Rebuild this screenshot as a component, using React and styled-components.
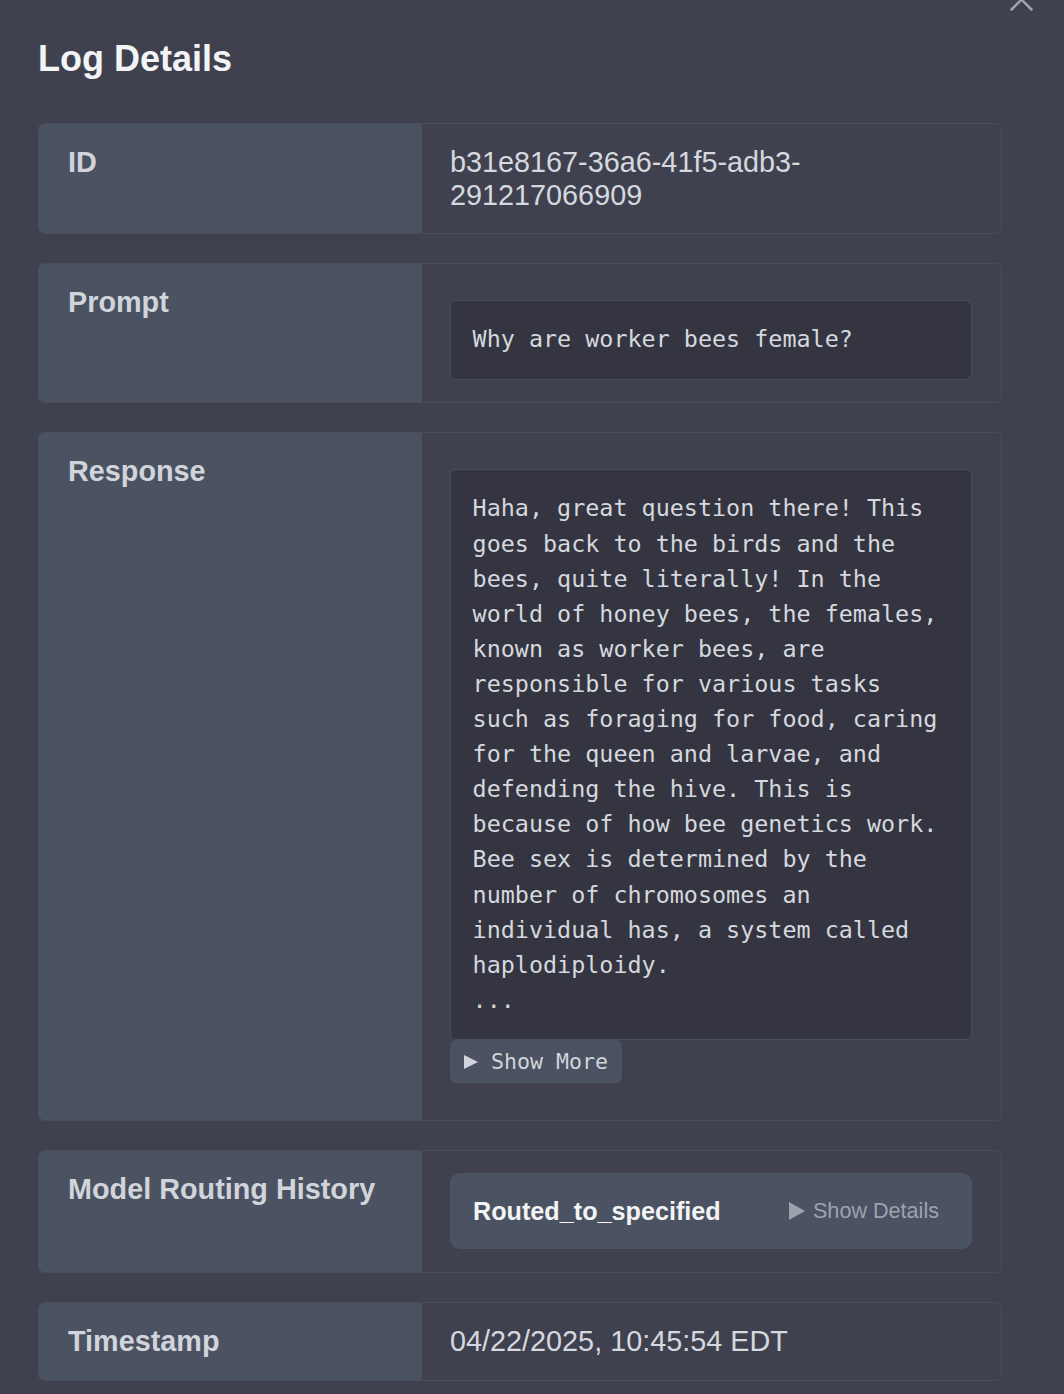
import React from "react";
import styled, { createGlobalStyle } from "styled-components";

const Global = createGlobalStyle`
  html, body {
    margin: 0;
    padding: 0;
    background: #40414f;
  }
  body {
    font-family: "Liberation Sans", Arial, sans-serif;
    -webkit-font-smoothing: antialiased;
  }
  * { box-sizing: border-box; }
`;

const Page = styled.div`
  position: relative;
  min-height: 1394px;
  padding: 1px 62px 0 38px;
  background: #40414f;
  overflow: hidden;
`;

const CloseButton = styled.button`
  position: absolute;
  top: -12px;
  right: 31px;
  width: 23px;
  height: 23px;
  padding: 0;
  border: 0;
  background: none;
  color: #9ca3af;
  display: block;
  cursor: pointer;
  svg { display: block; }
`;

const Title = styled.h2`
  margin: 37px 0 44px;
  font-size: 36px;
  font-weight: 700;
  line-height: 41px;
  color: #f3f4f6;
`;

const Rows = styled.div`
  display: flex;
  flex-direction: column;
  gap: 28.8px;
`;

const Row = styled.div`
  display: grid;
  grid-template-columns: 383px 1fr;
  border: 1px solid #4a4d5a;
  border-radius: 6px;
  overflow: hidden;
`;

const Label = styled.div`
  background: #4b5261;
  padding: 22px 29px 18px;
  font-size: 28.8px;
  font-weight: 700;
  line-height: 32.5px;
  color: #d1d5db;
`;

const Value = styled.div`
  padding: 22px 29px 22px 28px;
  font-size: 28.8px;
  line-height: 32.5px;
  color: #d5d8de;
  min-width: 0;
`;

const Code = styled.pre`
  margin: 14px 0 0;
  padding: 21.6px;
  background: #343541;
  border: 1px solid #4a4d5a;
  border-radius: 6px;
  font-family: "DejaVu Sans Mono", "Liberation Mono", monospace;
  font-size: 23.4px;
  line-height: 35.1px;
  color: #d5d8de;
  white-space: pre-wrap;
  word-break: normal;
`;

const ShowMore = styled.button`
  display: flex;
  align-items: center;
  gap: 13px;
  width: max-content;
  height: 43px;
  margin: 0 0 15px;
  padding: 0 14px 0 14px;
  background: #4b5261;
  border: 0;
  border-radius: 6px;
  font-family: "DejaVu Sans Mono", "Liberation Mono", monospace;
  font-size: 21.6px;
  color: #d1d5db;
  cursor: pointer;
  svg { display: block; flex: none; }
`;

const RouteCard = styled.div`
  display: flex;
  align-items: center;
  justify-content: space-between;
  height: 76px;
  margin: 0 0 1px;
  padding: 0 23px;
  background: #4b5261;
  border-radius: 10px;
`;

const RouteName = styled.span`
  font-size: 25.2px;
  font-weight: 700;
  color: #f3f4f6;
`;

const DetailsToggle = styled.button`
  display: flex;
  align-items: center;
  gap: 8px;
  padding: 0 10px;
  border: 0;
  background: none;
  font-family: "Liberation Sans", Arial, sans-serif;
  font-size: 21.6px;
  color: #9ca3af;
  cursor: pointer;
  svg { display: block; flex: none; }
`;

const Triangle = ({ w, h, color }) => (
  <svg width={w} height={h} viewBox={`0 0 ${w} ${h}`}>
    <polygon points={`0,0 ${w},${h / 2} 0,${h}`} fill={color} />
  </svg>
);

const responseText = `Haha, great question there! This
goes back to the birds and the
bees, quite literally! In the
world of honey bees, the females,
known as worker bees, are
responsible for various tasks
such as foraging for food, caring
for the queen and larvae, and
defending the hive. This is
because of how bee genetics work.
Bee sex is determined by the
number of chromosomes an
individual has, a system called
haplodiploidy.
...`;

export default function App() {
  return (
    <>
      <Global />
      <Page>
        <CloseButton aria-label="Close">
          <svg width="23" height="23" viewBox="0 0 23 23">
            <path
              d="M1.5 1.5 L21.5 21.5 M21.5 1.5 L1.5 21.5"
              stroke="currentColor"
              strokeWidth="2.5"
              strokeLinecap="round"
              fill="none"
            />
          </svg>
        </CloseButton>
        <Title>Log Details</Title>
        <Rows>
          <Row>
            <Label>ID</Label>
            <Value>
              b31e8167-36a6-41f5-adb3-<wbr />291217066909
            </Value>
          </Row>
          <Row>
            <Label>Prompt</Label>
            <Value>
              <Code>Why are worker bees female?</Code>
            </Value>
          </Row>
          <Row>
            <Label>Response</Label>
            <Value>
              <Code>{responseText}</Code>
              <ShowMore>
                <Triangle w={14} h={14} color="#d1d5db" />
                Show More
              </ShowMore>
            </Value>
          </Row>
          <Row>
            <Label>Model Routing History</Label>
            <Value>
              <RouteCard>
                <RouteName>Routed_to_specified</RouteName>
                <DetailsToggle>
                  <Triangle w={16} h={18} color="#9ca3af" />
                  Show Details
                </DetailsToggle>
              </RouteCard>
            </Value>
          </Row>
          <Row>
            <Label>Timestamp</Label>
            <Value>04/22/2025, 10:45:54 EDT</Value>
          </Row>
        </Rows>
      </Page>
    </>
  );
}
